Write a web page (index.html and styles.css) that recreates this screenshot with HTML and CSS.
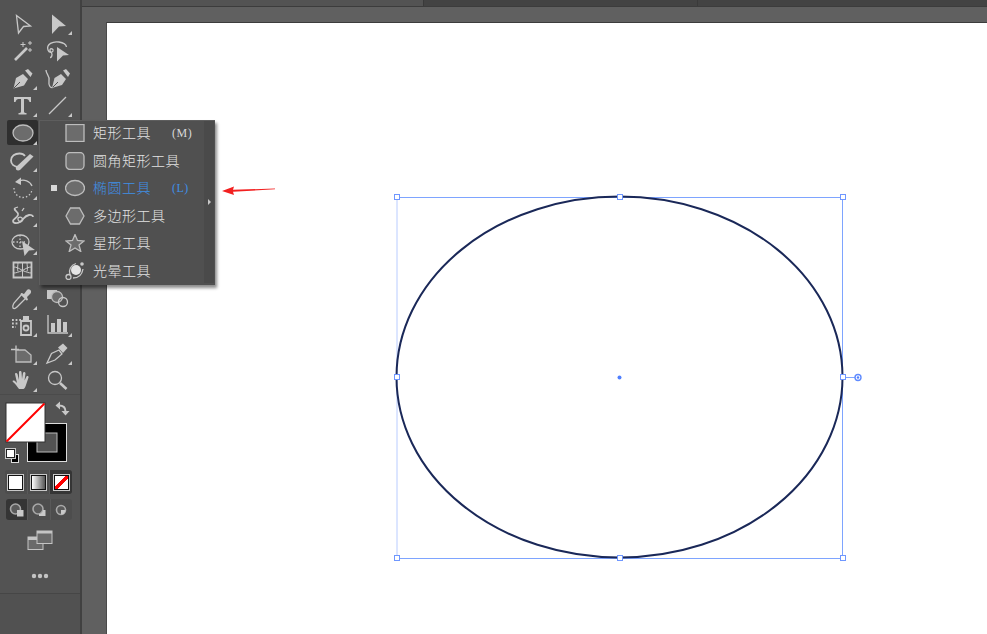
FILE: index.html
```html
<!DOCTYPE html>
<html lang="zh-CN">
<head>
<meta charset="utf-8">
<title>椭圆工具</title>
<link rel="stylesheet" href="styles.css">
</head>
<body>
<div class="app">
  <aside class="toolbar">
    <div class="tools">
      <div class="tool"><svg class="ic" viewBox="0 0 34 27"><path class="ln" d="M10.500 6.500 24.500 17 17.500 17.500 12.500 24z"/></svg></div>
      <div class="tool"><svg class="ic" viewBox="0 0 34 27"><path class="fl" d="M11 5.500 25 17 18 17.500 11 25z"/><path class="fl" d="M31 22v4h-4z"/></svg></div>

      <div class="tool"><svg class="ic" viewBox="0 0 34 27"><path class="ln thick" d="M9 24 21 12"/><path class="ln thin" d="M17 6v5M14.500 8.500h5M24 5v4M22 7h4M24 12v4M22 14h4"/></svg></div>
      <div class="tool"><svg class="ic" viewBox="0 0 34 27"><path class="ln" d="M7 14C5 8 12 5 18 6c4 .6 7 2 7.500 5M7 14c1 3 4 3 5 1 .6-2-2-3-3-1.500-.6 2 2 3 2 5 0 2-1 3-2 3"/><path class="fl" d="M16 11 28 19 22 19.500 16 25.500z"/></svg></div>

      <div class="tool"><svg class="ic" viewBox="0 0 34 27"><path class="fl" d="M7.500 24.500 10 14 17 10 22 15 18 21.500zM19 6.500 22 5 26.500 9.500 24.500 13z"/><path class="cut" d="M8 24 14 18"/><path class="fl" d="M31 22v4h-4z"/></svg></div>
      <div class="tool"><svg class="ic" viewBox="0 0 34 27"><path class="fl" d="M11 24 13.500 14 20 10 25 15 21 21zM22 6.500 25 5 29 9.500 27 13z"/><path class="cut" d="M11.500 23.500 17 18"/><path class="ln" d="M5 6c0 5 4 5 3 11-.5 4 1 7 3.500 6.500"/></svg></div>

      <div class="tool"><svg class="ic" viewBox="0 0 34 27"><path class="fl" d="M8 6h17v5h-1.500c-.5-2-1.500-3-3-3H18v12.500c0 1 1 1.500 2.500 1.500v1.500h-8V22c1.500 0 2.500-.5 2.500-1.500V8h-2.500c-1.500 0-2.500 1-3 3H8z"/><path class="fl" d="M31 22v4h-4z"/></svg></div>
      <div class="tool"><svg class="ic" viewBox="0 0 34 27"><path class="ln" d="M8 23 25 6"/><path class="fl" d="M31 22v4h-4z"/></svg></div>

      <div class="tool sel"><svg class="ic" viewBox="0 0 34 27"><ellipse class="sh" cx="17" cy="14" rx="10" ry="8"/><path class="fl" d="M31 22v4h-4z"/></svg></div>
      <div class="tool"></div>

      <div class="tool"><svg class="ic" viewBox="0 0 34 27"><path class="ln medium" d="M13 21c-5 0-8-3-8-6.500C5 10 9 7.500 13.500 7.500c2.500 0 4.500 1 5.500 2.500"/><path class="fl" d="M10 21 24 8 27.500 10.500 14 24c-2 1-5 .5-4-3z"/><path class="fl" d="M31 22v4h-4z"/></svg></div>
      <div class="tool"></div>

      <div class="tool"><svg class="ic" viewBox="0 0 34 27"><path class="ln" d="M13 7c5-2 11 0 13 5"/><path class="fl" d="M9 8 15 3.500V11z"/><path class="dot" d="M8 14a9 9 0 0 0 18 1"/><path class="fl" d="M31 22v4h-4z"/></svg></div>
      <div class="tool"></div>

      <div class="tool"><svg class="ic" viewBox="0 0 34 27"><path class="ln medium" d="M9 7c-2 3 4 3 3 7-1 3-5 4-5 6s3 3 7 1c4-3 4-6 9-7 2-.4 4 .5 4 2"/><path class="ln" d="M13 20c-3-3 1-5 3-3s-1 5-3 3zM9 7l3-1M16 10l2-3"/><path class="fl" d="M31 22v4h-4z"/></svg></div>
      <div class="tool"></div>

      <div class="tool"><svg class="ic" viewBox="0 0 34 27"><ellipse class="ln" cx="14.500" cy="13" rx="8.500" ry="7"/><path class="dot" d="M7 13h14M14 6v14"/><path class="fl" d="M16 12 29 21 23 21.500 18.500 27z"/><path class="fl" d="M31 22v4h-4z"/></svg></div>
      <div class="tool"></div>

      <div class="tool"><svg class="ic" viewBox="0 0 34 27"><path class="ln medium" d="M7.500 6.500h18v15h-18z"/><path class="ln thin" d="M7.500 11c3 0 5 1 9 3.500 4-2.500 6-3.500 9-3.500M7.500 17c3 0 5-1 9-2.500 4 1.500 6 2.500 9 2.500M16.500 6.500v15M12 6.500c0 3-1 6 0 9M21 6.500c0 3 1 6 0 9"/></svg></div>
      <div class="tool"></div>

      <div class="tool"><svg class="ic" viewBox="0 0 34 27"><path class="ln" d="M7 24c-1-2 0-3 1-5l8-9 4 4-9 9c-1 1-3 2-4 1z"/><path class="fl" d="M15 9 18 10 21 6c2-2 5.500 1 3.500 3.500L21 13l1 3-1.500 .5-6-6z"/><path class="fl" d="M31 22v4h-4z"/></svg></div>
      <div class="tool"><svg class="ic" viewBox="0 0 34 27"><path class="fl" d="M6 6h10v3c-3 1-4 3-4 6H6z"/><circle class="sh" cx="16" cy="13" r="5.500"/><circle class="ln" cx="22" cy="18" r="4.500"/></svg></div>

      <div class="tool"><svg class="ic" viewBox="0 0 34 27"><path class="dot2" d="M6 9h11M6 12.500h7M6 16h4"/><path class="ln medium" d="M15 10h10v14H15z"/><path class="fl" d="M17 5h6v5h-6z"/><circle class="ln medium" cx="20" cy="17" r="2.500"/><path class="fl" d="M31 22v4h-4z"/></svg></div>
      <div class="tool"><svg class="ic" viewBox="0 0 34 27"><path class="ln" d="M7 4v18h20"/><path class="fl" d="M10 12h4v9h-4zM16 8h4v13h-4zM22 11h4v10h-4z"/><path class="fl" d="M31 22v4h-4z"/></svg></div>

      <div class="tool"><svg class="ic" viewBox="0 0 34 27"><path class="ln" d="M5 10.500h8M10 6.500v5"/><path class="sh" d="M10 11h9l6 5v7H10z"/><path class="fl" d="M31 22v4h-4z"/></svg></div>
      <div class="tool"><svg class="ic" viewBox="0 0 34 27"><path class="ln" d="M6 24 10.500 14.500 18 11 21 15 14 21z"/><path class="fl" d="M17 8.500 22 4.500 26.500 9 22 14z"/><path class="fl" d="M31 22v4h-4z"/></svg></div>

      <div class="tool"><svg class="ic" viewBox="0 0 34 27"><path class="fl" d="M13 23c-2-2-3-5-6-7-1-1 0-2 2-1l2 2-2-9c0-1.500 2-1.500 2.500 0l1.500 6V6c0-1.500 2.500-1.500 2.500 0l.5 7 1-6c.5-1.500 2.500-1 2.500 .5l-1 7 2-4c1-1 2.500 0 2 1l-2 6c-1 3-2 5.500-3 5.500z"/><path class="fl" d="M31 22v4h-4z"/></svg></div>
      <div class="tool"><svg class="ic" viewBox="0 0 34 27"><circle class="ln" cx="14" cy="12" r="6.500"/><path class="ln thick" d="M19 17 25.500 23"/></svg></div>
    </div>

    <svg class="swatches" viewBox="0 396 80 70">
      <rect x="27.500" y="423.500" width="39" height="38" fill="#000" stroke="#ddd"/>
      <rect x="37" y="433" width="20" height="19" fill="#535353" stroke="#bbb"/>
      <rect x="6" y="403" width="39" height="39" fill="#fff" stroke="#333"/>
      <path d="M6.500 441.500 44.500 403.500" stroke="#f00" stroke-width="2"/>
      <path d="M59 405.500c4 0 6.500 2 6.500 6" fill="none" stroke="#c8c8c8" stroke-width="2"/>
      <path d="M60 401.500v8l-4.500-4zM61.500 411h8l-4 4.500z" fill="#c8c8c8"/>
      <rect x="11.500" y="454.500" width="7" height="8" fill="#000" stroke="#ddd"/>
      <rect x="6.500" y="449.500" width="8" height="8" fill="#fff" stroke="#222"/>
      <rect x="5.500" y="448.500" width="10" height="10" fill="none" stroke="#c8c8c8"/>
    </svg>

    <div class="group colour">
      <div class="cell"><span class="chip white"></span></div>
      <div class="cell"><span class="chip grad"></span></div>
      <div class="cell on"><span class="chip none"></span></div>
    </div>

    <div class="group draw">
      <div class="cell on"><svg class="mode" viewBox="0 0 20 18"><circle class="ring" cx="8.500" cy="8" r="5"/><rect class="fl" x="10" y="9" width="6.500" height="6.500"/></svg></div>
      <div class="cell"><svg class="mode" viewBox="0 0 20 18"><circle class="ring" cx="9" cy="8" r="5"/><path class="fl" d="M14 9h2.500v6H10V13c2 0 4-2 4-4z"/></svg></div>
      <div class="cell"><svg class="mode" viewBox="0 0 20 18"><circle class="ring" cx="10" cy="9" r="4.500"/><path class="fl" d="M10 9h4.500a4.500 4.500 0 0 1-4.500 4.500z"/></svg></div>
    </div>

    <svg class="screen" viewBox="0 0 26 20">
      <rect x="1" y="7" width="15" height="12.500" fill="#6a6a6a" stroke="#c4c4c4"/>
      <path d="M1 7h15v3H1z" fill="#c4c4c4"/>
      <rect x="10" y="1" width="15" height="12.500" fill="#6a6a6a" stroke="#c4c4c4"/>
      <path d="M10 1h15v2.500H10z" fill="#c4c4c4"/>
    </svg>

    <svg class="more" viewBox="0 0 18 6"><circle cx="3" cy="3" r="2.200"/><circle cx="9" cy="3" r="2.200"/><circle cx="15" cy="3" r="2.200"/></svg>

    <div class="foot"></div>
  </aside>

  <main class="workspace">
    <div class="tabs">
      <div class="tab-a"></div>
      <div class="tab-b"></div>
      <div class="tab-c"></div>
    </div>
    <div class="canvas">
      <div class="artboard">
        <svg class="art" viewBox="107 23 880 611">
          <path d="M397 197.500H842.500V558.500H397" fill="none" stroke="#7ea4ff"/>
          <path d="M397 197.500V558.500" fill="none" stroke="#b9ccff"/>
          <ellipse cx="619.500" cy="377" rx="223" ry="180.500" fill="none" stroke="#1a2858" stroke-width="2"/>
          <path d="M843 377.500h12" stroke="#7ea4ff"/>
          <circle cx="858" cy="377.500" r="3" fill="#fff" stroke="#5f8bff" stroke-width="1.400"/>
          <circle cx="858" cy="377.500" r="1.200" fill="#4f7fff"/>
          <g fill="#fff" stroke="#6f97ff">
            <rect x="394.500" y="194.500" width="5" height="5"/>
            <rect x="617.500" y="194.500" width="5" height="5"/>
            <rect x="840.500" y="194.500" width="5" height="5"/>
            <rect x="394.500" y="374.500" width="5" height="5"/>
            <rect x="840.500" y="374.500" width="5" height="5"/>
            <rect x="394.500" y="555.500" width="5" height="5"/>
            <rect x="617.500" y="555.500" width="5" height="5"/>
            <rect x="840.500" y="555.500" width="5" height="5"/>
          </g>
          <circle cx="619.500" cy="377.500" r="2" fill="#4f7fff"/>
          <path d="M222 191 234 186.500 233 189.800 275 188.500 275 189.300 233 191.800 234 195z" fill="#f22020"/>
        </svg>
      </div>
    </div>
  </main>

  <div class="flyout">
    <div class="fly-list">
      <div class="fly-row">
        <span class="mark"></span>
        <svg class="fly-ic" viewBox="0 0 20 18"><rect class="sh" x="1" y="0.500" width="18" height="17"/></svg>
        <span class="fly-name">矩形工具</span><span class="fly-key">(M)</span>
      </div>
      <div class="fly-row">
        <span class="mark"></span>
        <svg class="fly-ic" viewBox="0 0 20 18"><rect class="sh" x="1" y="0.500" width="18" height="17" rx="4"/></svg>
        <span class="fly-name">圆角矩形工具</span>
      </div>
      <div class="fly-row active">
        <span class="mark"><i class="mark-dot"></i></span>
        <svg class="fly-ic" viewBox="0 0 20 18"><ellipse class="sh" cx="10" cy="9" rx="9.500" ry="7.500"/></svg>
        <span class="fly-name">椭圆工具</span><span class="fly-key">(L)</span>
      </div>
      <div class="fly-row">
        <span class="mark"></span>
        <svg class="fly-ic" viewBox="0 0 20 18"><path class="sh" d="M1 9 5.500 1H14.500L19 9 14.500 17H5.500z"/></svg>
        <span class="fly-name">多边形工具</span>
      </div>
      <div class="fly-row">
        <span class="mark"></span>
        <svg class="fly-ic" viewBox="0 0 20 18"><path class="sh" d="M10 .5 12.500 6.500 19 7 14 11 15.800 17.500 10 14 4.200 17.500 6 11 1 7 7.500 6.500z"/></svg>
        <span class="fly-name">星形工具</span>
      </div>
      <div class="fly-row">
        <span class="mark"></span>
        <svg class="fly-ic" viewBox="0 0 20 18"><circle class="fl bright" cx="11" cy="8" r="5"/><path class="ln" d="M5 13C3 8 6 3 11 1.500M8 16c5 0 9-3 10-9"/><circle class="fl" cx="17" cy="2" r="1.800"/><circle class="ln" cx="3.500" cy="15" r="2.500"/></svg>
        <span class="fly-name">光晕工具</span>
      </div>
    </div>
    <div class="fly-tear"><i class="tear-arrow"></i></div>
  </div>
</div>
</body>
</html>
```

FILE: styles.css
```css
* { box-sizing: border-box; }
html, body { margin: 0; padding: 0; height: 100%; overflow: hidden; }
body { background: #606060; font-family: "Noto Sans CJK SC", "Liberation Serif", serif; }

.app { display: flex; width: 987px; height: 634px; position: relative; }

/* left tool panel */
.toolbar {
  width: 82px; height: 634px; flex: none;
  display: flex; flex-direction: column;
  background: #535353;
  border-right: 2px solid #414141;
  padding-top: 8.5px;
}
.tools {
  display: grid;
  grid-template-columns: 35px 35px;
  grid-auto-rows: 27.5px;
  padding-left: 6px;
  height: 386.5px;
  border-bottom: 1px solid #4b4b4b;
}
.tool { width: 34px; height: 27.5px; }
.tool.sel { position: relative; }
.tool.sel::before {
  content: ""; position: absolute;
  left: 1px; top: 1.5px; width: 31px; height: 25px;
  background: #2f2f2f; border-radius: 2px;
}
.ic { width: 34px; height: 27px; display: block; position: relative; }

.ln { fill: none; stroke: #c8c8c8; stroke-width: 1.3; }
.thick { stroke-width: 2.6; }
.medium { stroke-width: 1.8; }
.thin { stroke-width: 1; }
.fl { fill: #c8c8c8; stroke: none; }
.bright { fill: #e4e4e4; }
.sh { fill: #6c6c6c; stroke: #bdbdbd; stroke-width: 1.3; }
.ring { fill: #5a5a5a; stroke: #a8a8a8; stroke-width: 1.6; }
.cut { fill: none; stroke: #535353; stroke-width: 1; }
.dot { fill: none; stroke: #c8c8c8; stroke-width: 1.3; stroke-dasharray: 1.500 2; }
.dot2 { fill: none; stroke: #c8c8c8; stroke-width: 1.8; stroke-dasharray: 1.800 1.800; }

.swatches { display: block; width: 80px; height: 70px; flex: none; margin-top: 1px; }

.group {
  display: flex; flex: none;
  background: #4d4d4d;
  border-radius: 3px;
  overflow: hidden;
}
.colour { margin: 4px 0 0 5px; width: 67px; height: 24px; }
.draw { margin: 5px 0 0 6px; width: 66px; height: 21px; }
.cell {
  flex: 1;
  display: flex; align-items: center; justify-content: center;
  border-right: 1px solid #595959;
}
.cell:last-child { border-right: 0; }
.cell.on { background: #353535; }

.chip { display: block; width: 15px; height: 15px; border: 1px solid #111; outline: 1px solid #c8c8c8; }
.chip.white { background: #fff; }
.chip.grad { background: linear-gradient(90deg, #fff, #555); }
.chip.none { background: linear-gradient(135deg, #fff 0 40%, #f00 40% 60%, #fff 60% 100%); }
.mode { width: 20px; height: 18px; display: block; }

.screen { display: block; flex: none; width: 26px; height: 20px; margin: 10px 0 0 27px; }
.more { display: block; flex: none; width: 18px; height: 6px; margin: 23px 0 0 31px; fill: #c4c4c4; }
.foot { margin-top: auto; height: 41px; flex: none; border-top: 1px solid #464646; background: #515151; }

/* document area */
.workspace { flex: 1; display: flex; flex-direction: column; min-width: 0; }
.tabs { height: 7px; flex: none; display: flex; border-bottom: 1px solid #3c3c3c; background: #434343; }
.tab-a { width: 342px; background: #535353; border-right: 1px solid #3a3a3a; }
.tab-b { width: 274px; border-right: 1px solid #3a3a3a; }
.tab-c { flex: 1; }
.canvas { flex: 1; background: #606060; padding: 15px 0 0 24px; }
.artboard { width: 100%; height: 100%; background: #fff; border-top: 1px solid #3c3c3c; border-left: 1px solid #4a4a4a; }
.art { display: block; width: 880px; height: 611px; }

/* flyout menu */
.flyout {
  position: absolute; left: 39px; top: 120px;
  width: 176px; height: 165px;
  display: flex;
  background: #505050;
  border-top: 1px solid #5e5e5e;
  border-left: 1px solid #5e5e5e;
  box-shadow: 2px 3px 3px rgba(0, 0, 0, .45);
}
.fly-list { flex: 1; margin-top: -1.5px; }
.fly-row {
  height: 27.5px;
  display: flex; align-items: center;
  color: #e2e2e2;
  font-size: 14px; line-height: 1;
  letter-spacing: .5px;
}
.mark { width: 25px; flex: none; display: flex; justify-content: flex-end; padding-right: 8px; }
.mark-dot { display: block; width: 6px; height: 6px; background: #d8d8d8; }
.fly-ic { width: 20px; height: 18px; flex: none; margin-right: 8px; }
.fly-name { width: 79px; flex: none; white-space: nowrap; font-weight: 300; margin-bottom: 2px; }
.fly-key { font-family: "Liberation Serif", serif; font-size: 12px; letter-spacing: .5px; font-weight: 400; color: #d8d8d8; margin-bottom: 1px; }
.fly-row.active .fly-key { color: #3f8fe6; }
.fly-row.active { color: #3f8fe6; }
.fly-tear {
  width: 10px; flex: none;
  margin: 0 1px 2px 0;
  background: #4a4a4a;
  display: flex; align-items: center; justify-content: center;
}
.tear-arrow {
  display: block; width: 0; height: 0;
  border-left: 3px solid #c8c8c8;
  border-top: 3px solid transparent;
  border-bottom: 3px solid transparent;
}
```
